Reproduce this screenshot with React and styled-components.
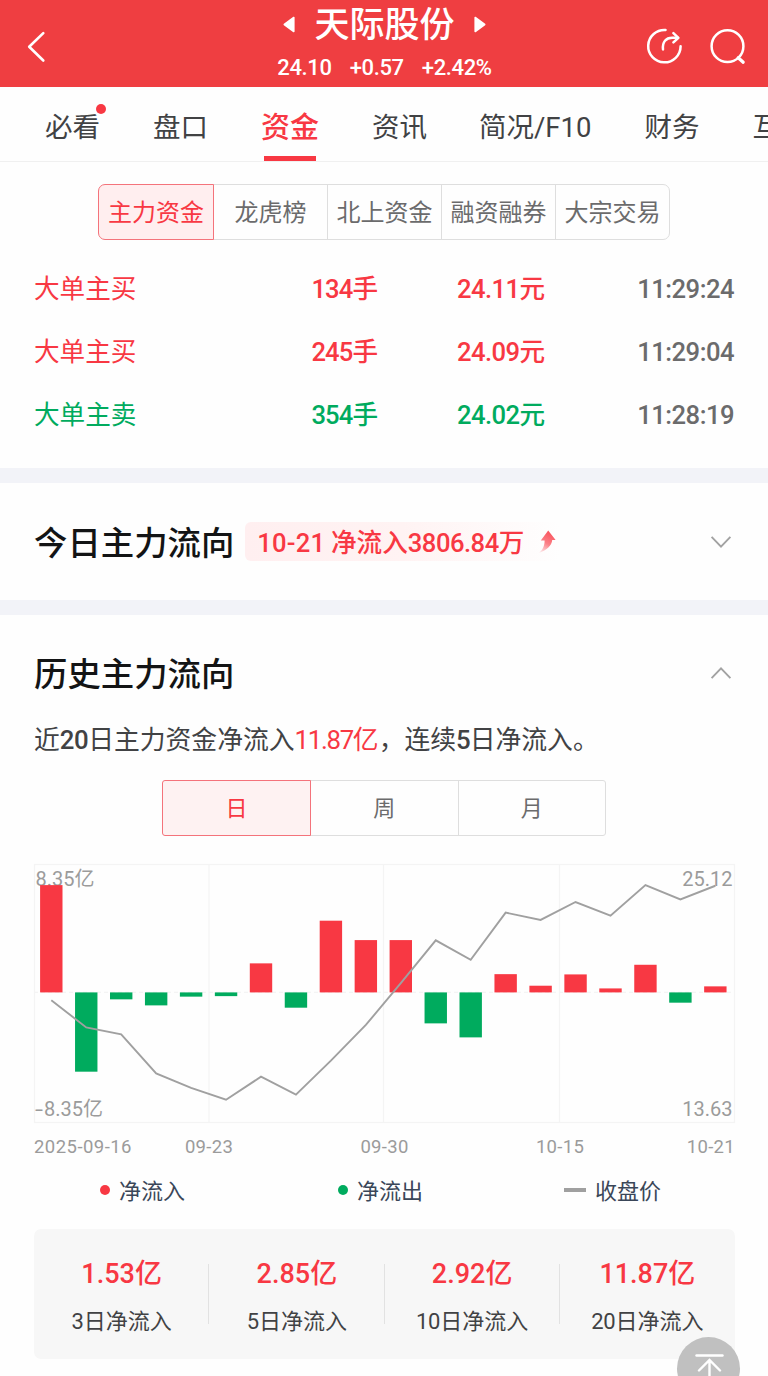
import React, { useState } from 'react';
import styled, { createGlobalStyle, ThemeProvider } from 'styled-components';

const theme = {
  colors: {
    header: '#ef3e41',
    up: '#f83843',
    down: '#00ab5e',
    upSoft: '#ffeeef',
    upFaint: '#fef2f2',
    heading: '#131415',
    text: '#414244',
    secondary: '#6b6b6c',
    muted: '#9b9b9b',
    border: '#dedede',
    grid: '#f4f4f4',
    band: '#f2f3f8',
    panel: '#f7f7f7',
    page: '#fefefe',
  },
};

const GlobalStyle = createGlobalStyle`
  * {
    box-sizing: border-box;
  }

  body {
    margin: 0;
    background: #fefefe;
    font-family: 'Noto Sans CJK SC', sans-serif;
    overflow: hidden;
  }
`;

const Page = styled.div`
  position: relative;
  width: 768px;
  height: 1376px;
  overflow: hidden;
  background: ${({ theme }) => theme.colors.page};
  color: ${({ theme }) => theme.colors.text};
`;

const Num = styled.span`
  font-family: Roboto, sans-serif;
  font-weight: ${({ $weight }) => $weight || 'inherit'};
  line-height: 0;
  letter-spacing: ${({ $spacing }) => $spacing || 0}px;
`;

const Header = styled.header`
  display: flex;
  align-items: center;
  justify-content: space-between;
  height: 87px;
  padding: 7px 22px 0 26px;
  background: ${({ theme }) => theme.colors.header};
  color: #fff;
`;

const HeaderSide = styled.div`
  display: flex;
  align-items: center;
  justify-content: ${({ $end }) => ($end ? 'flex-end' : 'flex-start')};
  gap: 25px;
  width: 110px;
`;

const HeaderCenter = styled.div`
  display: flex;
  flex-direction: column;
  align-items: center;
  margin: -7px 0 0 -3px;
`;

const StockName = styled.div`
  display: flex;
  align-items: center;
  gap: 19px;
  height: 48px;
  font-size: 35px;
  font-weight: 500;
  line-height: 40px;

  span {
    margin-top: -4px;
  }
`;

const Quote = styled.div`
  display: flex;
  gap: 18px;
  height: 39px;
  font-size: 22px;
  font-weight: 500;

  ${Num} {
    line-height: 40px;
  }
`;

const Tabs = styled.nav`
  display: flex;
  height: 75px;
  padding-left: 45px;
  border-bottom: 1px solid #f0f0f0;
`;

const Tab = styled.div`
  position: relative;
  flex: none;
  margin-right: ${({ $gap }) => $gap}px;
  font-size: ${({ $active }) => ($active ? 29 : 27.5)}px;
  font-weight: ${({ $active }) => ($active ? 500 : 400)};
  line-height: 76px;
  color: ${({ $active, theme }) => ($active ? theme.colors.up : theme.colors.text)};

  &::after {
    content: '';
    display: ${({ $active }) => ($active ? 'block' : 'none')};
    position: absolute;
    left: 3px;
    bottom: 0;
    width: 52px;
    height: 5px;
    background: ${({ theme }) => theme.colors.up};
  }
`;

const TabDot = styled.i`
  position: absolute;
  top: 17px;
  right: -6px;
  width: 10px;
  height: 10px;
  border-radius: 50%;
  background: ${({ theme }) => theme.colors.up};
`;

const Segments = styled.div`
  display: flex;
  width: ${({ $width }) => $width}px;
  height: 56px;
  margin: 0 auto;
`;

const Segment = styled.button`
  flex: 1;
  margin: 0 0 0 -1px;
  padding: 0 0 ${({ $lift }) => $lift}px;
  border: 1px solid ${({ $active, theme }) => ($active ? '#f4737b' : theme.colors.border)};
  background: ${({ $active, $tint, theme }) => ($active ? theme.colors[$tint] : 'transparent')};
  color: ${({ $active, theme }) => ($active ? theme.colors.up : theme.colors.secondary)};
  font-family: inherit;
  font-size: ${({ $size }) => $size}px;
  line-height: 48px;
  white-space: nowrap;
  z-index: ${({ $active }) => ($active ? 1 : 0)};

  &:first-child {
    flex: 0 0 ${({ $first }) => $first}px;
    margin-left: 0;
    border-radius: ${({ $radius }) => `${$radius}px 0 0 ${$radius}px`};
  }

  &:last-child {
    border-radius: ${({ $radius }) => `0 ${$radius}px ${$radius}px 0`};
  }
`;

const Orders = styled.section`
  height: 306px;
  padding-top: 22px;
`;

const OrderList = styled.div`
  padding: 17px 34px 0;
`;

const OrderRow = styled.div`
  display: grid;
  grid-template-columns: 200px 144px 167px 1fr;
  height: 63px;
  font-size: 25.6px;
  line-height: 60px;
  color: ${({ $side, theme }) => theme.colors[$side]};
`;

const OrderCell = styled.div`
  text-align: right;
  font-weight: 500;
`;

const OrderSide = styled.div``;

const OrderTime = styled(OrderCell)`
  color: ${({ theme }) => theme.colors.secondary};
`;

const Band = styled.div`
  height: 15px;
  background: ${({ theme }) => theme.colors.band};
`;

const SectionHead = styled.div`
  display: flex;
  align-items: center;
  height: ${({ $height }) => $height}px;
  padding: 0 36px 0 34px;
`;

const SectionTitle = styled.h2`
  margin: -2px 0 0;
  font-size: 33.4px;
  font-weight: 500;
  line-height: 48px;
  color: ${({ theme }) => theme.colors.heading};
`;

const FlowTag = styled.div`
  display: flex;
  align-items: center;
  gap: 14px;
  height: 39px;
  margin-left: 11px;
  padding: 0 4px 0 12px;
  border-radius: 6px;
  background: linear-gradient(90deg, #ffeff0, #fff3f3 50%, #fefefe);
  font-size: 25.6px;
  font-weight: 500;
  line-height: 37px;
  color: ${({ theme }) => theme.colors.up};

  > span {
    margin-top: -2px;
  }

  > svg {
    flex: none;
  }
`;

const Spacer = styled.div`
  flex: 1;
`;

const Summary = styled.p`
  margin: -8px 0 21px;
  padding-left: 34px;
  height: 36px;
  font-size: 25.8px;
  line-height: 29px;

  em {
    font-style: normal;
    color: ${({ theme }) => theme.colors.up};
  }
`;

const ChartBox = styled.div`
  height: 259px;
  margin: 28px 33px 0 34px;

  svg {
    display: block;
    overflow: visible;
  }

  text {
    font-family: Roboto, 'Noto Sans CJK SC', sans-serif;
    font-size: 20px;
    fill: ${({ theme }) => theme.colors.muted};
  }
`;

const DateAxis = styled.div`
  display: grid;
  grid-template-columns: 135px 80px 271px 80px 1fr;
  height: 48px;
  padding: 0 33px 0 34px;
  font-size: 18.5px;
  line-height: 45px;
  color: ${({ theme }) => theme.colors.muted};
  text-align: center;

  > span:first-child {
    text-align: left;
  }

  > span:last-child {
    text-align: right;
  }
`;

const Legend = styled.div`
  display: flex;
  height: 40px;
  font-size: 22px;
  line-height: 36px;
  color: #3a4658;
`;

const LegendItem = styled.div`
  display: flex;
  align-items: center;
  gap: 9px;
  width: ${({ $width }) => $width}px;
  height: 38px;
  margin-left: ${({ $left }) => $left || 0}px;

  span {
    margin-top: -3px;
  }
`;

const LegendDot = styled.i`
  width: 10px;
  height: 10px;
  border-radius: 50%;
  background: ${({ $tone, theme }) => theme.colors[$tone]};
`;

const LegendLine = styled.i`
  width: 22px;
  height: 4px;
  background: #a0a0a0;
`;

const Stats = styled.div`
  display: grid;
  grid-template-columns: repeat(4, 1fr);
  height: 130px;
  margin: 18px 33px 0 34px;
  border-radius: 7px;
  background: ${({ theme }) => theme.colors.panel};
`;

const Stat = styled.div`
  position: relative;
  padding-top: 21px;
  text-align: center;

  &:not(:last-child)::after {
    content: '';
    position: absolute;
    right: 0;
    top: 35px;
    width: 1px;
    height: 60px;
    background: #e2e2e2;
  }
`;

const StatValue = styled.div`
  height: 44px;
  font-size: 27px;
  font-weight: 500;
  line-height: 44px;
  color: ${({ theme }) => theme.colors.up};
`;

const StatLabel = styled.div`
  height: 36px;
  padding-top: 8px;
  font-size: 22px;
  line-height: 35px;
`;

const TopButton = styled.button`
  position: absolute;
  left: 677px;
  top: 1337px;
  width: 63px;
  height: 63px;
  padding: 0;
  border: 0;
  border-radius: 50%;
  background: #c0c0c0;
`;

// Wraps every run of figures so it gets the narrower numeric face
const Mixed = ({ children, spacing, weight }) =>
  children.split(/([\d.:+%F/-]+)/).map((part, i) =>
    i % 2 ? (
      <Num key={i} $spacing={spacing} $weight={weight}>{part}</Num>
    ) : (
      part
    )
  );

const BackIcon = () => (
  <svg width="20" height="32" viewBox="0 0 20 32" fill="none">
    <path d="M17.3 2.1 3.2 15.8 17.3 29.5" stroke="#fff" strokeWidth="2.6" strokeLinecap="round" strokeLinejoin="round" />
  </svg>
);

const TriangleIcon = ({ right }) => (
  <svg width="12" height="17" viewBox="0 0 12 17">
    <path
      d={right ? 'M1.2 1.5v14L10.7 8.5z' : 'M10.8 1.5v14L1.3 8.5z'}
      fill="#fff"
      stroke="#fff"
      strokeWidth="1.6"
      strokeLinejoin="round"
    />
  </svg>
);

const ShareIcon = () => (
  <svg width="38" height="38" viewBox="0 0 38 38" fill="none" stroke="#fff" strokeWidth="2.5" strokeLinecap="round" strokeLinejoin="round">
    <path d="M20.6 2A16.2 16.2 0 1 0 35.6 18.2" />
    <path d="M18 21.4c-.8-7.400 3-11.600 9.200-11.600h5.200" />
    <path d="m28.4 5.2 5 4.6-5 4.6" />
  </svg>
);

const SearchIcon = () => (
  <svg width="38" height="38" viewBox="0 0 38 38" fill="none" stroke="#fff" strokeWidth="2.5" strokeLinecap="round">
    <circle cx="19.5" cy="18.2" r="15.9" />
    <path d="m30.2 29.8 5 4.5" strokeWidth="3.2" />
  </svg>
);

const ChevronIcon = ({ up }) => (
  <svg width="22" height="14" viewBox="0 0 22 14" fill="none" stroke="#a2a2a2" strokeWidth="1.9">
    <path d={up ? 'M1.6 12.2 11 2.4l9.4 9.8' : 'M1.6 1.8 11 11.6l9.4-9.8'} />
  </svg>
);

const SurgeIcon = () => (
  <svg width="18" height="24" viewBox="0 0 18 24">
    <defs>
      <linearGradient id="surge" x1="0.6" y1="0" x2="0.2" y2="1">
        <stop offset="0" stopColor="#f9525b" />
        <stop offset="0.55" stopColor="#fb8087" />
        <stop offset="1" stopColor="#fde4e6" />
      </linearGradient>
    </defs>
    <path d="M10.2 .5 17.6 10h-3.400C13.8 15.500 8.800 20 1.200 22.800 5.400 19 6.600 15 6.600 10.500H2.800z" fill="url(#surge)" />
  </svg>
);

const ToTopIcon = () => (
  <svg width="63" height="63" viewBox="0 0 63 63" fill="none" stroke="#fff" strokeWidth="2.4" strokeLinecap="round">
    <path d="M19.5 18.5h26" />
    <path d="M32.5 23.5V46M22 33.5 32.5 23 43 33.5" />
  </svg>
);

const orders = [
  { side: 'up', label: '大单主买', volume: '134手', price: '24.11元', time: '11:29:24' },
  { side: 'up', label: '大单主买', volume: '245手', price: '24.09元', time: '11:29:04' },
  { side: 'down', label: '大单主卖', volume: '354手', price: '24.02元', time: '11:28:19' },
];

const flows = [
  8.35, -6.17, -0.54, -1.01, -0.33, -0.29, 2.26, -1.19, 5.58, 4.07,
  4.07, -2.41, -3.5, 1.42, 0.52, 1.4, 0.31, 2.15, -0.8, 0.47,
];

const closes = [
  18.95, 17.5, 17.13, 15.04, 14.26, 13.63, 14.86, 13.9, 15.72, 17.63,
  19.87, 22.16, 21.12, 23.64, 23.25, 24.21, 23.48, 25.12, 24.35, 25.08,
];

const stats = [
  { value: '1.53亿', label: '3日净流入' },
  { value: '2.85亿', label: '5日净流入' },
  { value: '2.92亿', label: '10日净流入' },
  { value: '11.87亿', label: '20日净流入' },
];

const tabs = [
  { label: '必看', gap: 53, dot: true },
  { label: '盘口', gap: 53 },
  { label: '资金', gap: 53 },
  { label: '资讯', gap: 52 },
  { label: '简况/F10', gap: 53 },
  { label: '财务', gap: 53 },
  { label: '互动', gap: 0 },
];

const FlowChart = () => {
  const zero = 128.4;
  const unit = 107.3 / 8.35;
  const x = (i) => 17.3 + i * 34.95;
  const y = (price) => 21 + ((25.12 - price) / (25.12 - 13.63)) * 214.7;

  return (
    <ChartBox>
      <svg width="701" height="259" viewBox="0 0 701 259">
        <g stroke={theme.colors.grid} strokeWidth="1.3" fill="none">
          <rect x="0.5" y="0.5" width="700" height="258" />
          <path d="M175 0v259M349.5 0v259M525.5 0v259" />
          <path d={`M0 ${zero}H701`} strokeDasharray="4 3" />
        </g>
        <text x="1.5" y="22">8.35亿</text>
        <text x="1" y="252"><tspan textLength="8" lengthAdjust="spacingAndGlyphs">-</tspan><tspan x="10">8.35亿</tspan></text>
        <text x="698.5" y="22" textAnchor="end">25.12</text>
        <text x="698.5" y="252" textAnchor="end">13.63</text>
        {flows.map((flow, i) => (
          <rect
            key={i}
            x={x(i) - 11.2}
            y={flow > 0 ? zero - flow * unit : zero}
            width="22.4"
            height={Math.abs(flow) * unit}
            fill={flow > 0 ? theme.colors.up : theme.colors.down}
          />
        ))}
        <polyline
          points={closes.map((price, i) => `${x(i)},${y(price)}`).join(' ')}
          fill="none"
          stroke="#a0a0a0"
          strokeWidth="1.9"
        />
      </svg>
    </ChartBox>
  );
};

const FundFlow = () => {
  const [source, setSource] = useState('主力资金');
  const [period, setPeriod] = useState('日');

  return (
    <Page>
      <Header>
        <HeaderSide>
          <BackIcon />
        </HeaderSide>
        <HeaderCenter>
          <StockName>
            <TriangleIcon />
            <span>天际股份</span>
            <TriangleIcon right />
          </StockName>
          <Quote>
            <Num $spacing={-0.35}>24.10</Num>
            <Num $spacing={-0.35}>+0.57</Num>
            <Num $spacing={-0.35}>+2.42%</Num>
          </Quote>
        </HeaderCenter>
        <HeaderSide $end>
          <ShareIcon />
          <SearchIcon />
        </HeaderSide>
      </Header>

      <Tabs>
        {tabs.map((tab) => (
          <Tab key={tab.label} $gap={tab.gap} $active={tab.label === '资金'}>
            <Mixed>{tab.label}</Mixed>
            {tab.dot && <TabDot />}
          </Tab>
        ))}
      </Tabs>

      <Orders>
        <Segments $width={572}>
          {['主力资金', '龙虎榜', '北上资金', '融资融券', '大宗交易'].map((name) => (
            <Segment
              key={name}
              $size={24}
              $radius={7}
              $first={116}
              $lift={2}
              $tint="upSoft"
              $active={name === source}
              onClick={() => setSource(name)}
            >
              {name}
            </Segment>
          ))}
        </Segments>
        <OrderList>
          {orders.map((order) => (
            <OrderRow key={order.time} $side={order.side}>
              <OrderSide>{order.label}</OrderSide>
              <OrderCell><Mixed spacing={-0.9}>{order.volume}</Mixed></OrderCell>
              <OrderCell><Mixed spacing={-0.6}>{order.price}</Mixed></OrderCell>
              <OrderTime><Mixed spacing={-0.5}>{order.time}</Mixed></OrderTime>
            </OrderRow>
          ))}
        </OrderList>
      </Orders>

      <Band />

      <SectionHead $height={117}>
        <SectionTitle>今日主力流向</SectionTitle>
        <FlowTag>
          <span>
            <Mixed spacing={0.2}>10-21</Mixed> <Mixed spacing={-0.5}>净流入3806.84万</Mixed>
          </span>
          <SurgeIcon />
        </FlowTag>
        <Spacer />
        <ChevronIcon />
      </SectionHead>

      <Band />

      <SectionHead $height={116}>
        <SectionTitle>历史主力流向</SectionTitle>
        <Spacer />
        <ChevronIcon up />
      </SectionHead>
      <Summary>
        近<Mixed weight={500} spacing={-0.5}>20</Mixed>日主力资金净流入
        <em><Mixed spacing={-1.3}>11.87亿</Mixed></em>
        ，连续<Mixed weight={500} spacing={-1}>5</Mixed>日净流入。
      </Summary>
      <Segments $width={444}>
        {['日', '周', '月'].map((name) => (
          <Segment
            key={name}
            $size={22}
            $radius={3}
            $first={149}
            $lift={4}
            $tint="upFaint"
            $active={name === period}
            onClick={() => setPeriod(name)}
          >
            {name}
          </Segment>
        ))}
      </Segments>

      <FlowChart />
      <DateAxis>
        <span><Num $spacing={0.45}>2025-09-16</Num></span>
        <span><Num $spacing={0.3}>09-23</Num></span>
        <span><Num $spacing={0.3}>09-30</Num></span>
        <span><Num $spacing={0.3}>10-15</Num></span>
        <span><Num $spacing={0.3}>10-21</Num></span>
      </DateAxis>
      <Legend>
        <LegendItem $left={100} $width={238}><LegendDot $tone="up" /><span>净流入</span></LegendItem>
        <LegendItem $width={226}><LegendDot $tone="down" /><span>净流出</span></LegendItem>
        <LegendItem $width={160}><LegendLine /><span>收盘价</span></LegendItem>
      </Legend>

      <Stats>
        {stats.map((stat) => (
          <Stat key={stat.label}>
            <StatValue><Mixed>{stat.value}</Mixed></StatValue>
            <StatLabel><Mixed spacing={-0.3}>{stat.label}</Mixed></StatLabel>
          </Stat>
        ))}
      </Stats>

      <TopButton>
        <ToTopIcon />
      </TopButton>
    </Page>
  );
};

const App = () => (
  <ThemeProvider theme={theme}>
    <GlobalStyle />
    <FundFlow />
  </ThemeProvider>
);

export default App;
